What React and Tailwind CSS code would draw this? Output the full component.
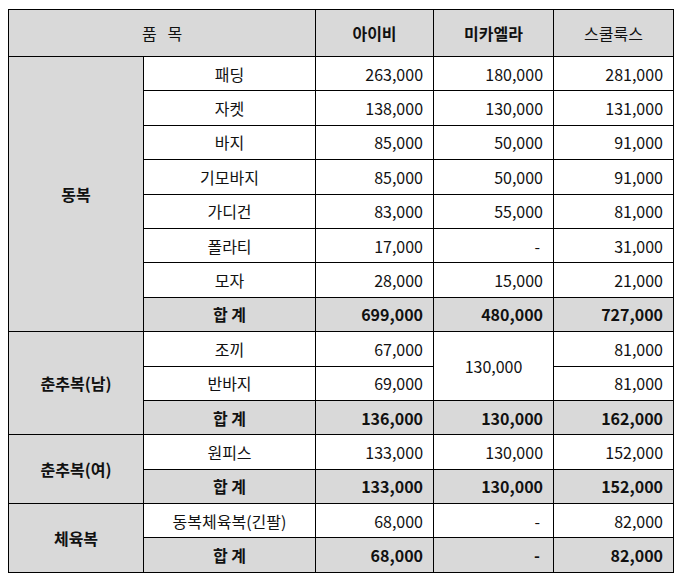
const dong = {
  group: "동복",
  items: [
    ["패딩", "263,000", "180,000", "281,000"],
    ["자켓", "138,000", "130,000", "131,000"],
    ["바지", "85,000", "50,000", "91,000"],
    ["기모바지", "85,000", "50,000", "91,000"],
    ["가디건", "83,000", "55,000", "81,000"],
    ["폴라티", "17,000", "-", "31,000"],
    ["모자", "28,000", "15,000", "21,000"],
  ],
  total: ["699,000", "480,000", "727,000"],
};

const Num = ({ v, bold, gray }) => (
  <td
    className={`border border-black text-right ${v === "-" ? "pr-[13px]" : "pr-[10px]"} ${bold ? "font-bold" : ""} ${gray ? "bg-[#d9d9d9]" : ""}`}
  >
    {v}
  </td>
);

const Item = ({ name }) => (
  <td className="border border-black text-center">{name}</td>
);

const Total = ({ vals }) => (
  <>
    <td className="border border-black text-center font-bold bg-[#d9d9d9]">합 계</td>
    {vals.map((v, i) => (
      <Num key={i} v={v} bold gray />
    ))}
  </>
);

const Group = ({ name, span }) => (
  <td rowSpan={span} className="border border-black text-center font-bold bg-[#d9d9d9]">
    {name}
  </td>
);

export default function App() {
  return (
    <div
      className="bg-white w-[677px] h-[579px] pl-[8px] pt-[9px] text-[16px] text-[#111]"
      style={{ fontFamily: '"Noto Sans CJK KR", "Noto Sans", sans-serif' }}
    >
      <table className="border-collapse table-fixed w-[665px] leading-none">
        <colgroup>
          <col className="w-[135px]" />
          <col className="w-[172px]" />
          <col className="w-[118px]" />
          <col className="w-[120px]" />
          <col className="w-[120px]" />
        </colgroup>
        <tbody>
          <tr className="h-[47px] bg-[#d9d9d9]">
            <td colSpan={2} className="border border-black text-center">품&nbsp;&nbsp;&nbsp;목</td>
            <td className="border border-black text-center font-bold">아이비</td>
            <td className="border border-black text-center font-bold">미카엘라</td>
            <td className="border border-black text-center">스쿨룩스</td>
          </tr>

          {dong.items.map((it, i) => (
            <tr key={it[0]} className="h-[34.4px]">
              {i === 0 && <Group name={dong.group} span={8} />}
              <Item name={it[0]} />
              <Num v={it[1]} />
              <Num v={it[2]} />
              <Num v={it[3]} />
            </tr>
          ))}
          <tr className="h-[34.4px]">
            <Total vals={dong.total} />
          </tr>

          {/* 춘추복(남) */}
          <tr className="h-[34.4px]">
            <Group name="춘추복(남)" span={3} />
            <Item name="조끼" />
            <Num v="67,000" />
            <td rowSpan={2} className="border border-black text-center">130,000</td>
            <Num v="81,000" />
          </tr>
          <tr className="h-[34.4px]">
            <Item name="반바지" />
            <Num v="69,000" />
            <Num v="81,000" />
          </tr>
          <tr className="h-[34.4px]">
            <Total vals={["136,000", "130,000", "162,000"]} />
          </tr>

          {/* 춘추복(여) */}
          <tr className="h-[34.4px]">
            <Group name="춘추복(여)" span={2} />
            <Item name="원피스" />
            <Num v="133,000" />
            <Num v="130,000" />
            <Num v="152,000" />
          </tr>
          <tr className="h-[34.4px]">
            <Total vals={["133,000", "130,000", "152,000"]} />
          </tr>

          {/* 체육복 */}
          <tr className="h-[34.4px]">
            <Group name="체육복" span={2} />
            <Item name="동복체육복(긴팔)" />
            <Num v="68,000" />
            <Num v="-" />
            <Num v="82,000" />
          </tr>
          <tr className="h-[34.4px]">
            <Total vals={["68,000", "-", "82,000"]} />
          </tr>
        </tbody>
      </table>
    </div>
  );
}
